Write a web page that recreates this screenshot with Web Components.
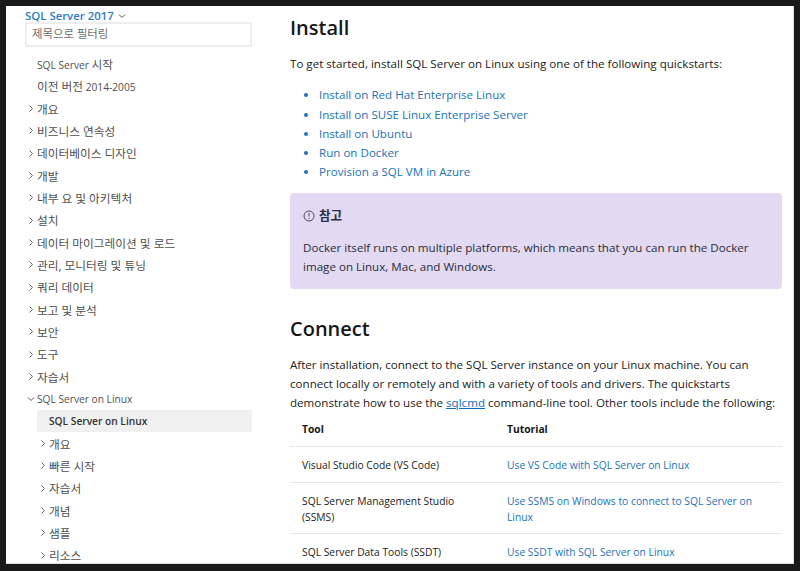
<!DOCTYPE html>
<html lang="ko"><head><meta charset="utf-8">
<style>
html,body{margin:0;padding:0;height:100%;background:#1a1a1a;overflow:hidden}
body{font-family:"Open Sans","Noto Sans CJK KR",sans-serif}
</style></head><body>
<doc-window>
<toc-sidebar slot="side" version="SQL Server 2017" placeholder="제목으로 필터링">
<toc-item>SQL Server <i>시작</i></toc-item>
<toc-item><i>이전 버전</i> 2014-2005</toc-item>
<toc-item ko arrow="right">개요</toc-item>
<toc-item ko arrow="right">비즈니스 연속성</toc-item>
<toc-item ko arrow="right">데이터베이스 디자인</toc-item>
<toc-item ko arrow="right">개발</toc-item>
<toc-item ko arrow="right">내부 요 및 아키텍처</toc-item>
<toc-item ko arrow="right">설치</toc-item>
<toc-item ko arrow="right">데이터 마이그레이션 및 로드</toc-item>
<toc-item ko arrow="right">관리, 모니터링 및 튜닝</toc-item>
<toc-item ko arrow="right">쿼리 데이터</toc-item>
<toc-item ko arrow="right">보고 및 분석</toc-item>
<toc-item ko arrow="right">보안</toc-item>
<toc-item ko arrow="right">도구</toc-item>
<toc-item ko arrow="right">자습서</toc-item>
<toc-item arrow="down">SQL Server on Linux</toc-item>
<toc-item level="1" active>SQL Server on Linux</toc-item>
<toc-item ko level="1" arrow="right">개요</toc-item>
<toc-item ko level="1" arrow="right">빠른 시작</toc-item>
<toc-item ko level="1" arrow="right">자습서</toc-item>
<toc-item ko level="1" arrow="right">개념</toc-item>
<toc-item ko level="1" arrow="right">샘플</toc-item>
<toc-item ko level="1" arrow="right">리소스</toc-item>
</toc-sidebar>
<doc-article slot="main">
<doc-heading>Install</doc-heading>
<doc-para class="intro">To get started, install SQL Server on Linux using one of the following quickstarts:</doc-para>
<link-list>
<a href="#">Install on Red Hat Enterprise Linux</a>
<a href="#">Install on SUSE Linux Enterprise Server</a>
<a href="#">Install on Ubuntu</a>
<a href="#">Run on Docker</a>
<a href="#">Provision a SQL VM in Azure</a>
</link-list>
<note-box label="참고">Docker itself runs on multiple platforms, which means that you can run the Docker image on Linux, Mac, and Windows.</note-box>
<doc-heading class="second">Connect</doc-heading>
<doc-para class="conn">After installation, connect to the SQL Server instance on your Linux machine. You can connect locally or remotely and with a variety of tools and drivers. The quickstarts demonstrate how to use the <a href="#" style="color:#0f6cbd;text-decoration:underline">sqlcmd</a> command-line tool. Other tools include the following:</doc-para>
<tool-table>
<tool-row head><span slot="a">Tool</span><span slot="b">Tutorial</span></tool-row>
<tool-row><span slot="a">Visual Studio Code (VS Code)</span><span slot="b">Use VS Code with SQL Server on Linux</span></tool-row>
<tool-row><span slot="a">SQL Server Management Studio (SSMS)</span><span slot="b">Use SSMS on Windows to connect to SQL Server on Linux</span></tool-row>
<tool-row last><span slot="a">SQL Server Data Tools (SSDT)</span><span slot="b">Use SSDT with SQL Server on Linux</span></tool-row>
</tool-table>
</doc-article>
</doc-window>
<script>
const FONT='"Open Sans","Noto Sans CJK KR",sans-serif';
function def(name,css,html){
  customElements.define(name,class extends HTMLElement{
    constructor(){super();const r=this.attachShadow({mode:'open'});
      r.innerHTML='<style>'+css+'</style>'+html;}
  });
}
const chev={
 right:'<svg width="6" height="9" viewBox="0 0 6 9"><path d="M1.5 1.5 L4.5 4.5 L1.5 7.5" fill="none" stroke="#666" stroke-width="1"/></svg>',
 down:'<svg width="8" height="6" viewBox="0 0 8 6"><path d="M1 1.5 L4 4.5 L7 1.5" fill="none" stroke="#555" stroke-width="1"/></svg>'
};
def('doc-window',`:host{display:flex;box-sizing:border-box;width:788px;height:558px;margin:6px 0 0 6px;background:#fff;overflow:hidden;border-bottom:1px solid #ddd;border-right:1px solid #ddd}
`,'<slot name="side"></slot><slot name="main"></slot>');
customElements.define('toc-sidebar',class extends HTMLElement{
  constructor(){super();const r=this.attachShadow({mode:'open'});
  r.innerHTML=`<style>:host{display:block;flex:0 0 246px;box-sizing:border-box;padding:3px 0 0 19px;font:10.2px ${FONT};color:#505050;overflow:hidden}
.v{display:flex;align-items:center;gap:4px;height:14px;font-size:11.4px;font-weight:600;color:#2b7cc4;line-height:14px}
.f{box-sizing:border-box;width:227px;height:25px;margin-top:-1px;border:2px solid #eee;padding:0 5px;line-height:20px;color:#6e6e6e;font-size:11.4px;margin-bottom:6px}
</style><div class="v"><span>${this.getAttribute('version')}</span>${chev.down}</div><div class="f">${this.getAttribute('placeholder')}</div><slot></slot>`;}
});
customElements.define('toc-item',class extends HTMLElement{
  constructor(){super();const r=this.attachShadow({mode:'open'});const a=this.getAttribute('arrow');
  r.innerHTML=`<style>:host{display:block;height:22.33px;line-height:22.33px;width:227px;position:relative;white-space:nowrap}
:host([ko]){font-size:11.7px}
::slotted(i){font-style:normal;font-size:11.7px}
.i{position:absolute;left:3px;top:0;height:22px;display:flex;align-items:center}
.t{display:block;padding-left:12px;height:22px}
:host([arrow="down"]) .i{left:2px}
:host([level="1"]) .i{left:15px}
:host([level="1"]) .t{padding-left:24px}
:host([active]) .t{font-weight:600;margin-left:12px;padding-left:12px;background:#f0f0f0;color:#333}
</style>`+(a?`<span class="i">${chev[a]}</span>`:'')+'<span class="t"><slot></slot></span>';}
});
def('doc-article',`:host{display:block;flex:1;box-sizing:border-box;padding:11px 11px 0 38px;color:#171717;font:11.6px/19.2px ${FONT};overflow:hidden;min-width:0}`,'<slot></slot>');
def('doc-heading',`:host{display:block;font:600 20px/22px ${FONT};color:#171717}
:host(.second){margin-top:29px}`,'<slot></slot>');
def('doc-para',`:host{display:block;line-height:19.2px;color:#222}
:host(.intro){margin-top:15px}
:host(.conn){margin-top:15px}`,'<slot></slot>');
def('link-list',`:host{display:block;margin-top:12px;padding-left:29px}
::slotted(a){display:list-item;list-style:disc;color:#2272b9;text-decoration:none;line-height:19.3px}`,'<slot></slot>');
customElements.define('note-box',class extends HTMLElement{
  constructor(){super();const r=this.attachShadow({mode:'open'});
  r.innerHTML=`<style>:host{display:block;box-sizing:border-box;margin-top:11px;height:96px;background:#e2daf2;border-radius:4px;padding:13px;color:#2b2b3a;line-height:19.2px}
.h{display:flex;align-items:center;gap:4px;font-weight:700;font-size:12.6px;height:20px;color:#2c2c44}
.b{margin-top:12px}
</style><div class="h"><svg width="12" height="12" viewBox="0 0 12 12"><circle cx="6" cy="6" r="5" fill="none" stroke="#4d4466" stroke-width="1"/><path d="M6 3v3.6M6 8v1" stroke="#4d4466" stroke-width="1"/></svg><span>${this.getAttribute('label')}</span></div><div class="b"><slot></slot></div>`;}
});
def('tool-table',`:host{display:block;margin-top:1px;font-size:10.3px}`,'<slot></slot>');
def('tool-row',`:host{display:grid;grid-template-columns:205px 1fr;box-sizing:border-box;border-bottom:1px solid #e6e6e6;padding:10px 12px 8.6px;line-height:16px;color:#222}
:host([head]){font-weight:700;color:#171717;padding-top:8px;padding-bottom:9px}
:host([last]){border-bottom:0}
:host(:not([head])) ::slotted([slot="b"]){color:#2272b9}
.a{padding-right:28px}
.b{padding-right:12px}
`,'<div class="a"><slot name="a"></slot></div><div class="b"><slot name="b"></slot></div>');
</script>
</body></html>
